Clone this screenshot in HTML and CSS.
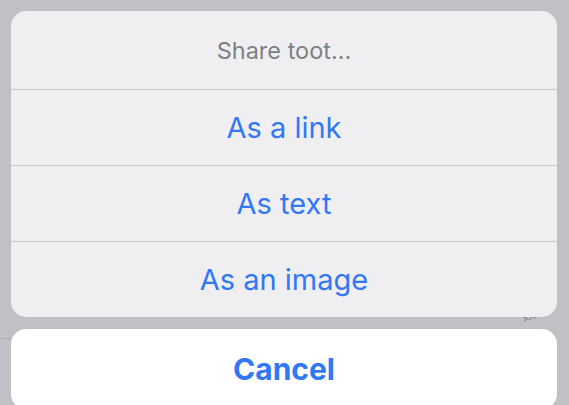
FILE: index.html
```html
<!DOCTYPE html>
<html lang="en">
  <head>
    <meta charset="utf-8" />
    <link rel="stylesheet" href="styles.css">
  </head>
  <body>
    <div class="backdrop">
      <div class="backdrop-line"></div>
      <span class="backdrop-arrows">&gt;&gt;&gt;&gt;&gt;</span>
    </div>
    <main class="action-sheet">
      <section class="sheet">
        <div class="sheet-title">Share toot…</div>
        <button class="sheet-item">As a link</button>
        <button class="sheet-item">As text</button>
        <button class="sheet-item">As an image</button>
      </section>
      <button class="sheet-cancel">Cancel</button>
    </main>
  </body>
</html>
```

FILE: styles.css
```css
html, body {
  margin: 0;
  height: 100%;
  overflow: hidden;
}

body {
  background: #c1c0c5;
  font-family: Inter, "Noto Sans", sans-serif;
  position: relative;
}

.backdrop-line {
  position: absolute;
  left: 0;
  top: 338px;
  width: 11px;
  height: 1px;
  background: #aeadb2;
}

.backdrop-arrows {
  position: absolute;
  left: 522px;
  top: 310px;
  font-size: 9px;
  color: #6f6e73;
  letter-spacing: -1px;
  transform: rotate(-14deg);
}

.action-sheet {
  position: relative;
  padding: 11px 12px 0 11px;
  display: flex;
  flex-direction: column;
  gap: 12px;
}

.sheet {
  background: #efeff1;
  border-radius: 15px;
  display: flex;
  flex-direction: column;
  overflow: hidden;
}

.sheet-title {
  height: 78px;
  display: flex;
  align-items: center;
  justify-content: center;
  font-size: 23.5px;
  color: #7f7f83;
}

button {
  font-family: inherit;
  border: none;
  cursor: pointer;
}

.sheet-item {
  height: 76px;
  border-top: 1px solid #c9c9cc;
  background: transparent;
  font-size: 29px;
  color: #3278f5;
  padding: 0;
}

.sheet-cancel {
  height: 80px;
  background: #fff;
  border-radius: 15px;
  font-size: 30px;
  font-weight: 700;
  color: #3278f5;
  padding: 0;
}
```
